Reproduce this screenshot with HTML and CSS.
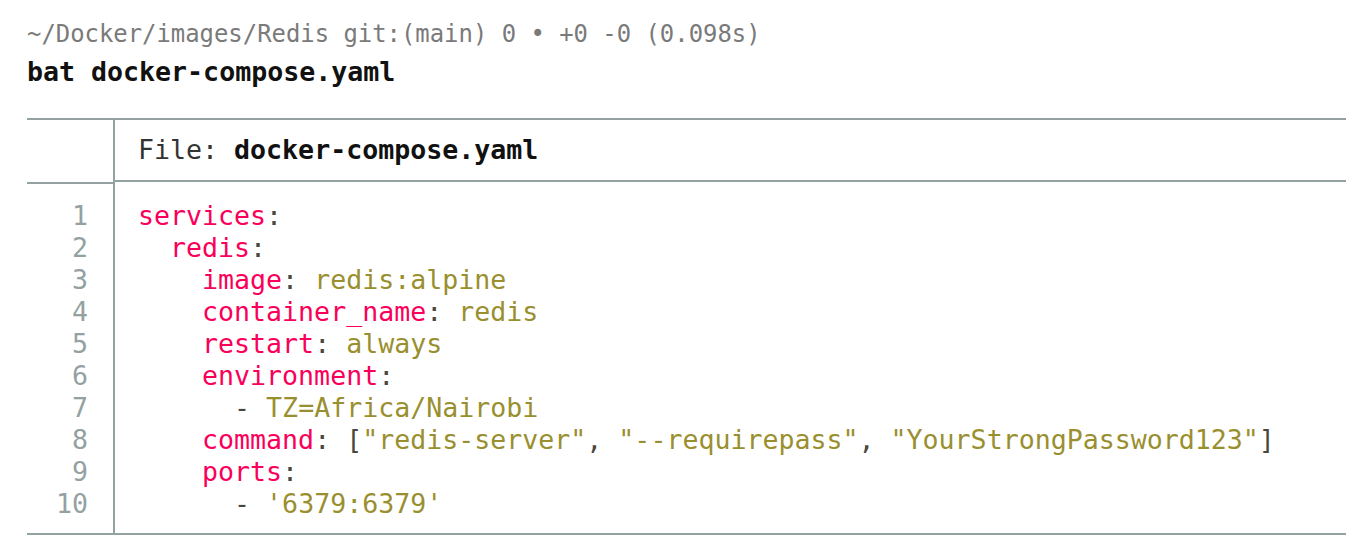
FILE: index.html
```html
<!DOCTYPE html>
<html>
<head>
<meta charset="utf-8">
<link rel="stylesheet" href="styles.css">
</head>
<body>
<div class="prompt">~/Docker/images/Redis git:(main) 0 • +0 -0 (0.098s)</div>
<div class="cmd">bat docker-compose.yaml</div>
<div class="frame">
  <div class="gutter head"></div>
  <div class="body head">File: <b>docker-compose.yaml</b></div>
  <div class="gutter nums">
    <div>1</div><div>2</div><div>3</div><div>4</div><div>5</div><div>6</div><div>7</div><div>8</div><div>9</div><div>10</div>
  </div>
  <div class="body code"><div><span class="k">services</span><span class="p">:</span></div><div>  <span class="k">redis</span><span class="p">:</span></div><div>    <span class="k">image</span><span class="p">:</span> <span class="s">redis:alpine</span></div><div>    <span class="k">container_name</span><span class="p">:</span> <span class="s">redis</span></div><div>    <span class="k">restart</span><span class="p">:</span> <span class="s">always</span></div><div>    <span class="k">environment</span><span class="p">:</span></div><div>      <span class="p">-</span> <span class="s">TZ=Africa/Nairobi</span></div><div>    <span class="k">command</span><span class="p">:</span> <span class="p">[</span><span class="s">"redis-server"</span><span class="p">,</span> <span class="s">"--requirepass"</span><span class="p">,</span> <span class="s">"YourStrongPassword123"</span><span class="p">]</span></div><div>    <span class="k">ports</span><span class="p">:</span></div><div>      <span class="p">-</span> <span class="s">'6379:6379'</span></div></div>
</div>
</body>
</html>
```
FILE: styles.css
```css
html, body {
  margin: 0;
  padding: 0;
  background: #ffffff;
}
body {
  font-family: "DejaVu Sans Mono", "Liberation Mono", monospace;
  padding-top: 15px;
}
.prompt {
  padding-left: 27px;
  font-size: 23.9px;
  line-height: 38px;
  color: #7a7a7a;
  white-space: pre;
}
.cmd {
  padding-left: 27px;
  font-size: 26.6px;
  line-height: 38px;
  font-weight: bold;
  color: #111111;
  white-space: pre;
}
.frame {
  margin-top: 27px;
  margin-left: 27px;
  display: grid;
  grid-template-columns: 88px 1fr;
  border-top: 2px solid #93a1a1;
  border-bottom: 2px solid #93a1a1;
  font-size: 26.6px;
}
.gutter {
  border-right: 2px solid #93a1a1;
}
.head {
  height: 62px;
  border-bottom: 2px solid #93a1a1;
}
.body.head {
  display: flex;
  align-items: center;
  padding-left: 23px;
  padding-bottom: 1px;
  box-sizing: border-box;
  color: #333333;
  white-space: pre;
}
.body.head b {
  color: #111111;
  font-weight: bold;
}
.nums {
  padding: 16px 25px 13px 0;
  text-align: right;
  color: #93a1a1;
  line-height: 32px;
}
.code {
  padding: 16px 0 13px 23px;
  line-height: 32px;
  white-space: pre;
}
.k { color: #f9005a; }
.s { color: #998f2f; }
.p { color: #49483e; }
```
